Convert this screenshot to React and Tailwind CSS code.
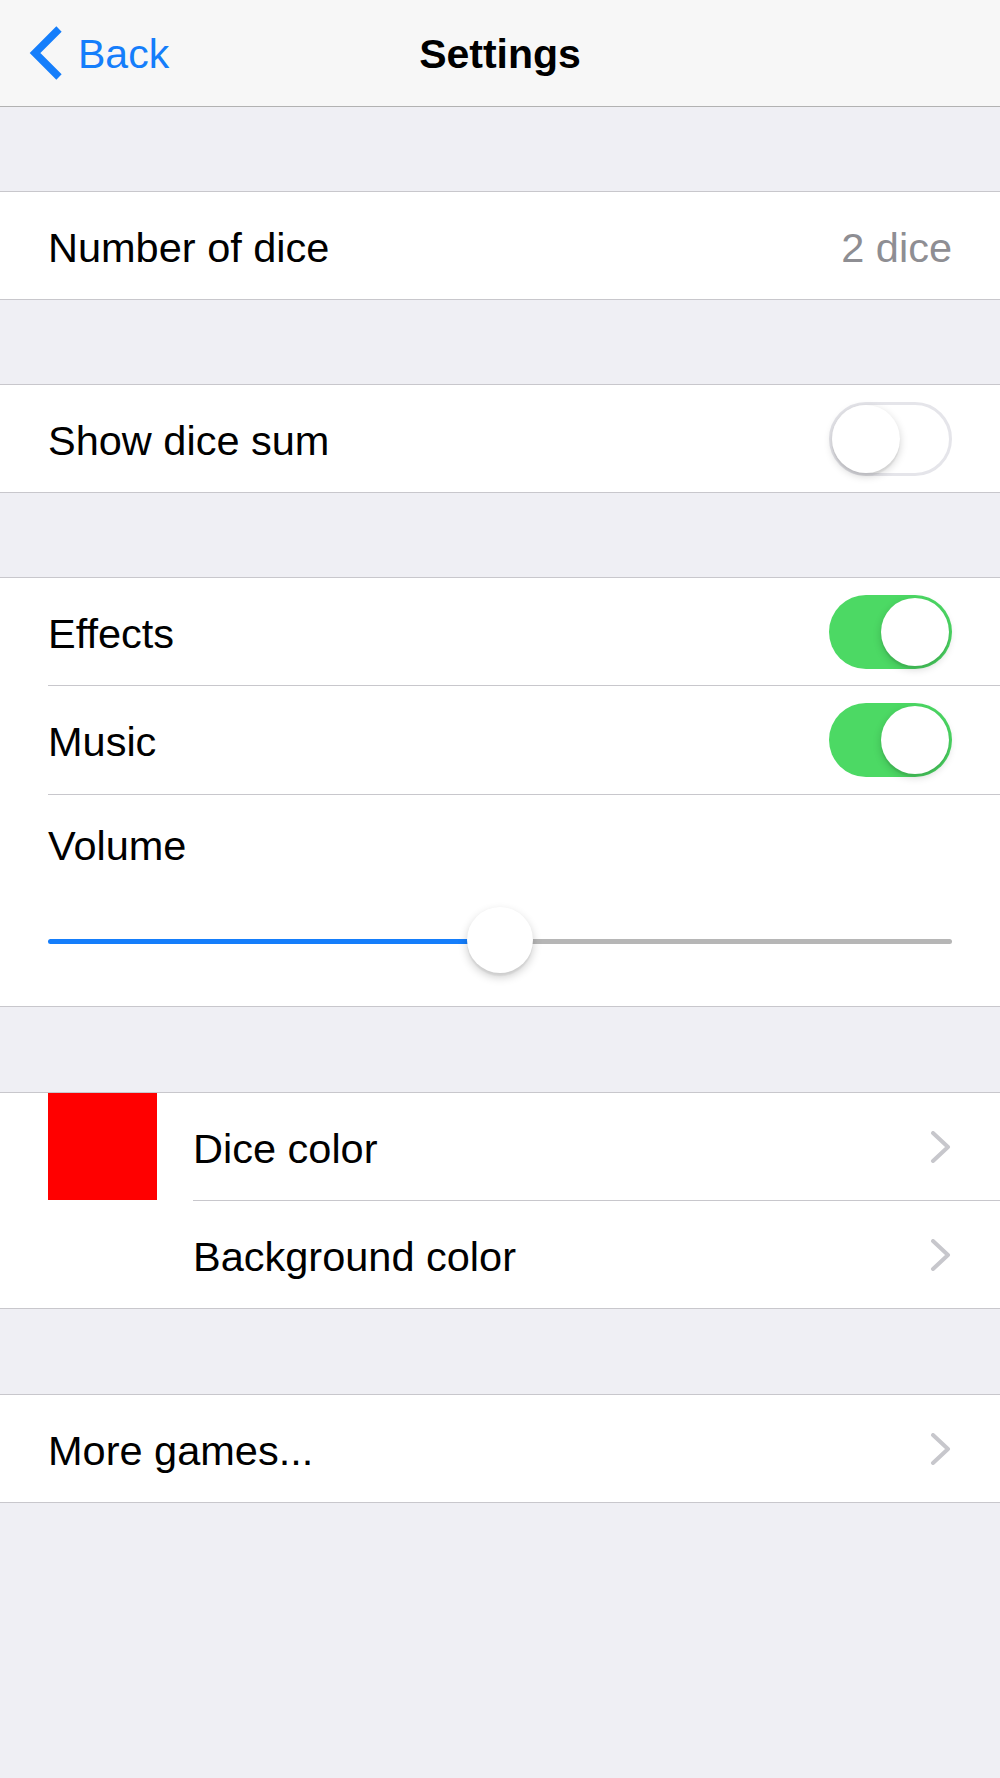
import React from "react";

const font = { fontFamily: '"Liberation Sans", Arial, sans-serif' };

function Toggle({ on }) {
  if (on) {
    return (
      <div className="w-[123px] h-[74px] rounded-full bg-[#4cd964] flex items-center justify-end pr-[3px] shrink-0">
        <div className="w-[68px] h-[68px] rounded-full bg-white shadow-[0_3px_8px_rgba(0,0,0,0.18),0_3px_1px_rgba(0,0,0,0.06)]" />
      </div>
    );
  }
  return (
    <div className="w-[123px] h-[74px] rounded-full bg-white border-[3px] border-[#e5e5ea] flex items-center justify-start shrink-0">
      <div className="w-[68px] h-[68px] rounded-full bg-white shadow-[0_3px_8px_rgba(0,0,0,0.18),0_3px_1px_rgba(0,0,0,0.06)]" />
    </div>
  );
}

function Chevron() {
  return (
    <svg width="22" height="32" viewBox="0 0 22 32" className="shrink-0">
      <polyline points="3,2 18,16 3,30" fill="none" stroke="#c7c7cc" strokeWidth="4" strokeLinecap="round" strokeLinejoin="round" />
    </svg>
  );
}

function Gap({ h = "h-[84px]" }) {
  return <div className={`${h} bg-[#efeff4]`} />;
}

function Section({ children }) {
  return <div className="bg-white border-y border-[#c8c7cc]">{children}</div>;
}

function Label({ children, className = "" }) {
  return <span className={`text-[41.5px] leading-none pt-[4px] ${className}`}>{children}</span>;
}

export default function App() {
  return (
    <div className="w-[1000px] min-h-[1778px] bg-[#efeff4] text-black" style={font}>
      {/* Nav bar */}
      <div className="h-[107px] bg-[#f7f7f7] border-b border-[#b2b2b2] relative flex items-center justify-center">
        <div className="absolute left-[28px] top-0 h-full flex items-center">
          <svg width="36" height="54" viewBox="0 0 36 54" className="mr-[14px]">
            <polyline points="31,3 7,27 31,51" fill="none" stroke="#157efb" strokeWidth="7.5" strokeLinecap="butt" strokeLinejoin="miter" />
          </svg>
          <span className="text-[41px] text-[#157efb] leading-none pt-[2px]">Back</span>
        </div>
        <span className="text-[41px] font-bold leading-none pt-[2px]">Settings</span>
      </div>

      <Gap />
      <Section>
        <div className="h-[107px] flex items-center justify-between px-[48px]">
          <Label>Number of dice</Label>
          <Label className="text-[#8e8e93]">2 dice</Label>
        </div>
      </Section>

      <Gap />
      <Section>
        <div className="h-[107px] flex items-center justify-between px-[48px]">
          <Label>Show dice sum</Label>
          <Toggle on={false} />
        </div>
      </Section>

      <Gap />
      <Section>
        <div className="pl-[48px]">
          <div className="h-[108px] flex items-center justify-between pr-[48px] border-b border-[#c8c7cc]">
            <Label>Effects</Label>
            <Toggle on />
          </div>
          <div className="h-[109px] flex items-center justify-between pr-[48px] border-b border-[#c8c7cc]">
            <Label>Music</Label>
            <Toggle on />
          </div>
        </div>
        <div className="h-[211px] flex flex-col px-[48px] pt-[30px]">
          <span className="text-[41.5px] leading-none">Volume</span>
          <div className="relative h-[66px] mt-[42px] flex items-center">
            <div className="h-[5px] w-1/2 bg-[#157efb] rounded-l-full" />
            <div className="h-[5px] w-1/2 bg-[#b6b6b6] rounded-r-full" />
            <div className="absolute left-1/2 -top-[2px] -ml-[33px] w-[66px] h-[66px] rounded-full bg-white shadow-[0_4px_10px_rgba(0,0,0,0.2),0_3px_1px_rgba(0,0,0,0.05)]" />
          </div>
        </div>
      </Section>

      <Gap h="h-[85px]" />
      <Section>
        <div className="flex">
          <div className="w-[193px] shrink-0 pl-[48px]">
            <div className="w-[109px] h-[107px] bg-[#ff0000]" />
          </div>
          <div className="flex-1">
            <div className="h-[108px] flex items-center justify-between pr-[48px] border-b border-[#c8c7cc]">
              <Label>Dice color</Label>
              <Chevron />
            </div>
            <div className="h-[107px] flex items-center justify-between pr-[48px]">
              <Label>Background color</Label>
              <Chevron />
            </div>
          </div>
        </div>
      </Section>

      <Gap h="h-[85px]" />
      <Section>
        <div className="h-[107px] flex items-center justify-between px-[48px]">
          <Label>More games...</Label>
          <Chevron />
        </div>
      </Section>
    </div>
  );
}
